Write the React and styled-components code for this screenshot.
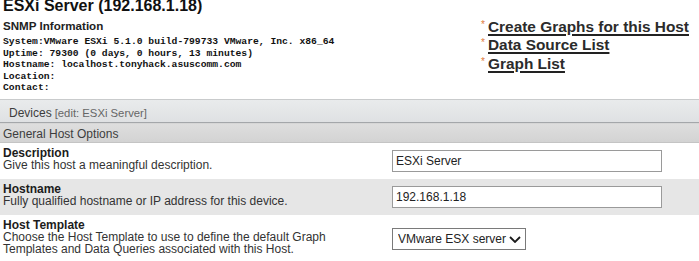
import React from "react";
import styled, { createGlobalStyle } from "styled-components";

const GlobalStyle = createGlobalStyle`
  html, body { margin: 0; padding: 0; background: #ffffff; }
  body {
    font-family: "Liberation Sans", Arial, sans-serif;
    color: #333333;
    overflow: hidden;
  }
`;

const Page = styled.div`
  width: 699px;
`;

const Header = styled.header`
  display: grid;
  grid-template-columns: 1fr 218px;
  padding-left: 3px;
`;

const HostInfo = styled.div`
  padding-bottom: 5.3px;
`;

const Title = styled.h1`
  margin: -3.5px 0 0;
  font-size: 16px;
  line-height: 18px;
  font-weight: bold;
  color: #111;
`;

const SectionTitle = styled.h2`
  margin: 4.3px 0 0;
  font-size: 11.6px;
  line-height: 14px;
  font-weight: bold;
  color: #222;
`;

const SnmpList = styled.div`
  margin-top: 3.4px;
  font-family: "Liberation Mono", "Courier New", monospace;
  font-weight: bold;
  font-size: 9.7px;
  line-height: 11.5px;
  color: #111;
  white-space: pre;
`;

const LinkList = styled.ul`
  list-style: none;
  margin: 0;
  padding: 18px 0 0;
`;

const LinkItem = styled.li`
  display: flex;
  align-items: flex-start;
  font-size: 15.4px;
  line-height: 18.3px;
  font-weight: bold;
`;

const Star = styled.span`
  width: 7px;
  font-size: 10px;
  line-height: 10px;
  margin-top: 2px;
  color: #e0793a;
  font-weight: normal;
`;

const NavLink = styled.a`
  color: #2b2b2b;
  text-decoration: underline;
  text-decoration-thickness: 2px;
  text-underline-offset: 1.5px;
  text-decoration-color: #222;
  cursor: pointer;
`;

const Bar = styled.div`
  display: flex;
  align-items: baseline;
  font-size: 12px;
  line-height: 12px;
  padding: ${(p) => p.$pad};
  background: ${(p) => p.$bg};
  border-top: 1px solid ${(p) => p.$top};
  border-bottom: 1px solid ${(p) => p.$bottom};
`;

const BarTitle = styled.span`
  color: #3d3d3d;
`;

const BarNote = styled.span`
  margin-left: 3px;
  font-size: 11.3px;
  color: #666;
`;

const FormRow = styled.div`
  display: grid;
  grid-template-columns: 392px 1fr;
  background: ${(p) => (p.$alt ? "#e6e6e6" : "#ffffff")};
`;

const LabelCell = styled.div`
  padding: 4px 3px 8px;
  font-size: 12px;
  line-height: 12px;
  color: #333;
`;

const FieldTitle = styled.div`
  font-weight: bold;
  color: #1c1c1c;
`;

const FieldCell = styled.div`
  display: flex;
  align-items: center;
`;

const TextInput = styled.input`
  box-sizing: border-box;
  width: 270px;
  height: 22px;
  margin: 0;
  padding: 0 3px;
  border: 1px solid #9a9a9a;
  border-radius: 0;
  font-family: "Liberation Sans", Arial, sans-serif;
  font-size: 12px;
  color: #222;
  background: #fff;
  outline: none;
`;

const SelectWrap = styled.div`
  position: relative;
  width: 134px;
  height: 22px;
`;

const Select = styled.select`
  box-sizing: border-box;
  width: 100%;
  height: 100%;
  margin: 0;
  padding: 0 0 0 5px;
  border: 1px solid #7a7a7a;
  border-radius: 0;
  appearance: none;
  background: #fff;
  font-family: "Liberation Sans", Arial, sans-serif;
  font-size: 12px;
  color: #222;
  outline: none;
`;

const Chevron = styled.svg`
  position: absolute;
  left: 117px;
  top: 8px;
  pointer-events: none;
`;

const snmp = [
  "System:VMware ESXi 5.1.0 build-799733 VMware, Inc. x86_64",
  "Uptime: 79300 (0 days, 0 hours, 13 minutes)",
  "Hostname: localhost.tonyhack.asuscomm.com",
  "Location:",
  "Contact:",
];

const links = ["Create Graphs for this Host", "Data Source List", "Graph List"];

export default function App() {
  return (
    <Page>
      <GlobalStyle />
      <Header>
        <HostInfo>
          <Title>ESXi Server (192.168.1.18)</Title>
          <SectionTitle>SNMP Information</SectionTitle>
          <SnmpList>
            {snmp.map((l) => (
              <div key={l}>{l}</div>
            ))}
          </SnmpList>
        </HostInfo>
        <LinkList>
          {links.map((l) => (
            <LinkItem key={l}>
              <Star>*</Star>
              <NavLink>{l}</NavLink>
            </LinkItem>
          ))}
        </LinkList>
      </Header>

      <Bar
        $pad="7px 9px 3px"
        $bg="linear-gradient(#e9ebec, #dfe1e3)"
        $top="#c9cbcc"
        $bottom="#a4a7aa"
      >
        <BarTitle>Devices</BarTitle>
        <BarNote>[edit: ESXi Server]</BarNote>
      </Bar>
      <Bar
        $pad="4px 3px 2px"
        $bg="linear-gradient(#dedede, #d3d3d3)"
        $top="#d6d6d6"
        $bottom="#c4c4c4"
      >
        <BarTitle>General Host Options</BarTitle>
      </Bar>

      <FormRow>
        <LabelCell>
          <FieldTitle>Description</FieldTitle>
          Give this host a meaningful description.
        </LabelCell>
        <FieldCell>
          <TextInput defaultValue="ESXi Server" />
        </FieldCell>
      </FormRow>
      <FormRow $alt>
        <LabelCell>
          <FieldTitle>Hostname</FieldTitle>
          Fully qualified hostname or IP address for this device.
        </LabelCell>
        <FieldCell>
          <TextInput defaultValue="192.168.1.18" />
        </FieldCell>
      </FormRow>
      <FormRow>
        <LabelCell>
          <FieldTitle>Host Template</FieldTitle>
          Choose the Host Template to use to define the default Graph
          <br />
          Templates and Data Queries associated with this Host.
        </LabelCell>
        <FieldCell>
          <SelectWrap>
            <Select defaultValue="vmware">
              <option value="vmware">VMware ESX server</option>
            </Select>
            <Chevron width="12" height="7" viewBox="0 0 12 7">
              <path d="M1 1 L6 6 L11 1" fill="none" stroke="#1a1a1a" strokeWidth="1.8" />
            </Chevron>
          </SelectWrap>
        </FieldCell>
      </FormRow>
    </Page>
  );
}
